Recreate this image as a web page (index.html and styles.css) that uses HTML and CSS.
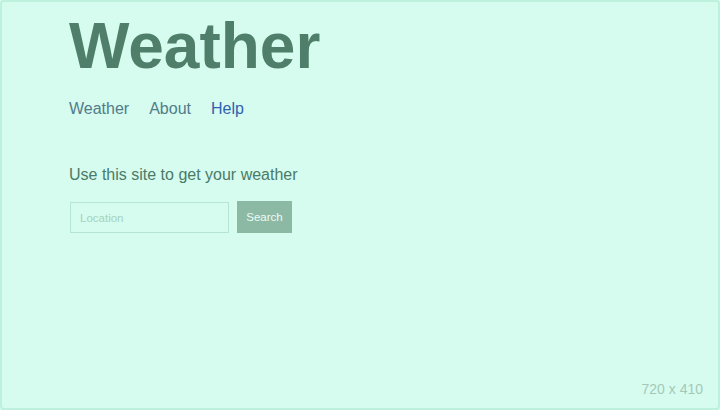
FILE: index.html
```html
<!DOCTYPE html>
<html lang="en">
<head>
<meta charset="utf-8">
<title>Weather</title>
<link rel="stylesheet" href="styles.css">
</head>
<body>
<div class="page">
  <main class="content">
    <h1 class="title">Weather</h1>
    <nav class="nav">
      <a class="nav-link" href="#">Weather</a>
      <a class="nav-link" href="#">About</a>
      <a class="nav-link nav-link--active" href="#">Help</a>
    </nav>
    <p class="intro">Use this site to get your weather</p>
    <form class="search">
      <input class="search-input" type="text" placeholder="Location">
      <button class="search-button" type="button">Search</button>
    </form>
  </main>
  <footer class="size-label">720 x 410</footer>
</div>
</body>
</html>
```
FILE: styles.css
```css
* { box-sizing: border-box; }
html, body { margin: 0; padding: 0; height: 100%; }
body {
  font-family: "Liberation Sans", Arial, sans-serif;
  background: #d5fcee;
}
.page {
  height: 410px;
  display: flex;
  flex-direction: column;
  border: 2px solid #bdf0dd;
  border-radius: 4px;
  background: #d5fcee;
  padding: 12px 15px 11px 67px;
}
.content { display: flex; flex-direction: column; align-items: flex-start; }
.title {
  margin: 0;
  font-size: 64px;
  line-height: 64px;
  font-weight: bold;
  color: #4f7f6b;
}
.nav {
  display: flex;
  gap: 20px;
  margin-top: 21px;
}
.nav-link {
  font-size: 16px;
  line-height: 20px;
  color: #527b8a;
  text-decoration: none;
}
.nav-link--active { color: #2f62b0; }
.intro {
  margin: 46px 0 0;
  font-size: 16px;
  line-height: 20px;
  color: #4b7a68;
}
.search {
  display: flex;
  align-items: flex-start;
  gap: 8px;
  margin-top: 16px;
}
.search-input {
  width: 159px;
  height: 31px;
  margin: 1px 0 0 1px;
  border: 1px solid #b5e6d3;
  background: #d5fcee;
  padding: 0 9px;
  font-family: "Liberation Sans", Arial, sans-serif;
  font-size: 11.5px;
  color: #4b7a68;
  outline: none;
}
.search-input::placeholder { color: #a6d2c0; }
.search-button {
  width: 55px;
  height: 32px;
  border: none;
  background: #8bb9a3;
  color: #eef9f4;
  font-family: "Liberation Sans", Arial, sans-serif;
  font-size: 11.5px;
  padding: 0;
}
.size-label {
  margin-top: auto;
  align-self: flex-end;
  font-size: 14px;
  line-height: 16px;
  color: #a5c8b9;
}
```
